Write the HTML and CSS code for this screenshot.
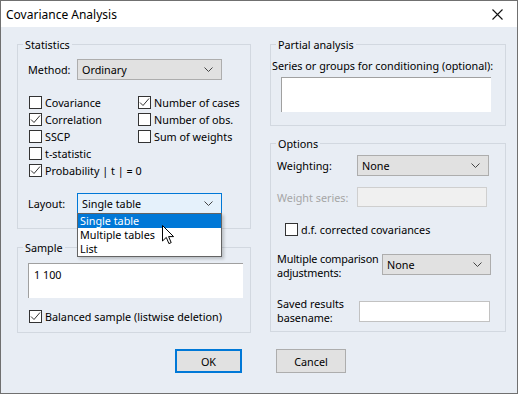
FILE: index.html
```html
<!DOCTYPE html>
<html lang="en">
<head>
    <meta charset="UTF-8">
    <title>Covariance Analysis</title>
    <link rel="stylesheet" href="styles.css">
</head>
<body>
    <div class="window">
        <div class="titlebar">
            <span>Covariance Analysis</span>
            <svg class="close" width="11" height="11" viewBox="0 0 11 11">
                <path d="M0.5 0.5 L10.5 10.5 M10.5 0.5 L0.5 10.5" stroke="#111" stroke-width="1.1" fill="none"/>
            </svg>
        </div>

        <div class="content">
            <div class="columns">
                <div class="col-left">
                    <fieldset class="group">
                        <legend>Statistics</legend>
                        <div class="stats-body">
                            <div class="field-row">
                                <span class="label method-label">Method:</span>
                                <div class="select">
                                    <span>Ordinary</span>
                                    <svg class="chev" width="9" height="5" viewBox="0 0 9 5"><path d="M0.5 0.5 L4.5 4.5 L8.5 0.5" stroke="#444" fill="none"/></svg>
                                </div>
                            </div>

                            <div class="check-grid">
                                <div class="check-row"><span class="box"></span>Covariance</div>
                                <div class="check-row"><span class="box checked"><svg width="11" height="11" viewBox="0 0 11 11"><path d="M1 5.5 L4 8.5 L10 1.5" stroke="#333" stroke-width="1" fill="none"/></svg></span>Number of cases</div>
                                <div class="check-row"><span class="box checked"><svg width="11" height="11" viewBox="0 0 11 11"><path d="M1 5.5 L4 8.5 L10 1.5" stroke="#333" stroke-width="1" fill="none"/></svg></span>Correlation</div>
                                <div class="check-row"><span class="box"></span>Number of obs.</div>
                                <div class="check-row"><span class="box"></span>SSCP</div>
                                <div class="check-row"><span class="box"></span>Sum of weights</div>
                                <div class="check-row"><span class="box"></span>t-statistic</div>
                                <div class="check-row"></div>
                                <div class="check-row wide"><span class="box checked"><svg width="11" height="11" viewBox="0 0 11 11"><path d="M1 5.5 L4 8.5 L10 1.5" stroke="#333" stroke-width="1" fill="none"/></svg></span>Probability | t | = 0</div>
                            </div>

                            <div class="field-row layout-row">
                                <span class="label method-label">Layout:</span>
                                <div class="select focused">
                                    <span>Single table</span>
                                    <svg class="chev" width="9" height="5" viewBox="0 0 9 5"><path d="M0.5 0.5 L4.5 4.5 L8.5 0.5" stroke="#444" fill="none"/></svg>
                                    <ul class="dropdown">
                                        <li class="active">Single table</li>
                                        <li>Multiple tables</li>
                                        <li>List</li>
                                    </ul>
                                    <svg class="pointer" width="13" height="20" viewBox="0 0 13 20">
                                        <path d="M0.5 0.5 L0.5 16 L4.3 12.4 L6.9 18.6 L9.2 17.6 L6.6 11.6 L11.6 11.6 Z" fill="#fff" stroke="#000" stroke-width="1" stroke-linejoin="round"/>
                                    </svg>
                                </div>
                            </div>
                        </div>
                    </fieldset>

                    <fieldset class="group sample">
                        <legend>Sample</legend>
                        <div class="sample-body">
                            <div class="textarea">1 100</div>
                            <div class="check-row balanced"><span class="box checked"><svg width="11" height="11" viewBox="0 0 11 11"><path d="M1 5.5 L4 8.5 L10 1.5" stroke="#333" stroke-width="1" fill="none"/></svg></span>Balanced sample (listwise deletion)</div>
                        </div>
                    </fieldset>
                </div>

                <div class="col-right">
                    <fieldset class="group">
                        <legend>Partial analysis</legend>
                        <div class="partial-body">
                            <div class="partial-label">Series or groups for conditioning (optional):</div>
                            <div class="textarea partial-input"></div>
                        </div>
                    </fieldset>

                    <fieldset class="group options">
                        <legend>Options</legend>
                        <div class="options-body">
                            <div class="field-row">
                                <span class="label weight-label">Weighting:</span>
                                <div class="select weight-select">
                                    <span>None</span>
                                    <svg class="chev" width="9" height="5" viewBox="0 0 9 5"><path d="M0.5 0.5 L4.5 4.5 L8.5 0.5" stroke="#444" fill="none"/></svg>
                                </div>
                            </div>
                            <div class="field-row series-row">
                                <span class="label weight-label disabled">Weight series:</span>
                                <div class="input disabled-input"></div>
                            </div>
                            <div class="check-row df-row"><span class="box"></span>d.f. corrected covariances</div>
                            <div class="field-row multi-row">
                                <span class="label multi-label">Multiple comparison adjustments:</span>
                                <div class="select multi-select">
                                    <span>None</span>
                                    <svg class="chev" width="9" height="5" viewBox="0 0 9 5"><path d="M0.5 0.5 L4.5 4.5 L8.5 0.5" stroke="#444" fill="none"/></svg>
                                </div>
                            </div>
                            <div class="field-row saved-row">
                                <span class="label saved-label">Saved results basename:</span>
                                <div class="input saved-input"></div>
                            </div>
                        </div>
                    </fieldset>
                </div>
            </div>

            <div class="buttons">
                <button class="btn default">OK</button>
                <button class="btn cancel">Cancel</button>
            </div>
        </div>
    </div>
</body>
</html>
```

FILE: styles.css
```css
body {
    margin: 0;
    font-family: "Noto Sans", sans-serif;
    font-size: 10.8px;
    color: #000;
}

.window {
    width: 518px;
    height: 394px;
    box-sizing: border-box;
    border: 1px solid #707070;
    background-color: #e8edf4;
    display: flex;
    flex-direction: column;
}

.titlebar {
    height: 26px;
    background-color: #fff;
    display: flex;
    align-items: center;
    justify-content: space-between;
    padding: 0 14px 0 5px;
    font-size: 12px;
}

.content {
    padding: 10px 11px 0 16px;
}

.columns {
    display: flex;
    gap: 19px;
}

.col-left {
    width: 234px;
}

.col-right {
    width: 236px;
}

.group {
    margin: 0;
    padding: 0;
    border: 1px solid #d2d8e0;
    min-width: 0;
}

.group legend {
    margin-left: 5px;
    padding: 0 2px;
    line-height: 15px;
}

.field-row {
    display: flex;
    align-items: center;
}

.label {
    flex-shrink: 0;
}

.select {
    position: relative;
    box-sizing: border-box;
    height: 21px;
    width: 145px;
    border: 1px solid #adadad;
    background-color: #e1e1e1;
    display: flex;
    align-items: center;
    justify-content: space-between;
    padding: 0 8px 0 4px;
}

.select.focused {
    border-color: #0078d7;
    background-color: #e5f1fb;
}

.chev {
    display: block;
}

.stats-body {
    padding: 7px 10px 14px 10px;
}

.method-label {
    width: 49px;
}

.check-grid {
    margin-top: 14px;
    display: grid;
    grid-template-columns: 109px auto;
}

.check-row {
    height: 17px;
    display: flex;
    align-items: center;
    white-space: nowrap;
}

.box {
    box-sizing: border-box;
    width: 13px;
    height: 13px;
    border: 1px solid #333;
    background-color: #fff;
    margin: 0 3px 0 1px;
    display: flex;
    align-items: center;
    justify-content: center;
}

.layout-row {
    margin-top: 14px;
}

.dropdown {
    position: absolute;
    top: 19px;
    left: -1px;
    width: 145px;
    box-sizing: border-box;
    margin: 0;
    padding: 0;
    list-style: none;
    background-color: #fff;
    border: 1px solid #646464;
    box-shadow: 2px 2px 3px rgba(0, 0, 0, 0.2);
    z-index: 2;
}

.dropdown li {
    height: 14px;
    line-height: 14px;
    padding-left: 2px;
}

.dropdown li.active {
    background-color: #0078d7;
    color: #fff;
}

.pointer {
    position: absolute;
    top: 31px;
    left: 84px;
    z-index: 3;
}

.sample {
    margin-top: 11px;
}

.sample-body {
    padding: 8px 6px 7px 10px;
}

.textarea {
    box-sizing: border-box;
    height: 35px;
    width: 215px;
    background-color: #fff;
    border-top: 1px solid #a0a0a0;
    border-left: 1px solid #a0a0a0;
    padding: 3px 5px;
}

.balanced {
    margin-top: 10px;
}

.partial-body {
    padding: 6px 0 13px 1px;
}

.partial-label {
    line-height: 15px;
    white-space: nowrap;
}

.partial-input {
    margin: 4px 0 0 9px;
    width: 210px;
}

.options {
    margin-top: 10px;
}

.options-body {
    padding: 4px 6px 6px 6px;
}

.weight-label {
    width: 80px;
}

.disabled {
    color: #a6a6a6;
}

.weight-select {
    width: 132px;
}

.input {
    box-sizing: border-box;
    height: 21px;
    background-color: #fff;
    border: 1px solid #c2c2c2;
}

.disabled-input {
    width: 130px;
    height: 20px;
    background-color: #f0f0f0;
    border-color: #cfcfcf;
}

.series-row {
    margin-top: 11px;
}

.df-row {
    margin-top: 14px;
    padding-left: 7px;
}

.multi-row {
    margin-top: 14px;
    align-items: flex-start;
}

.multi-label {
    width: 105px;
    line-height: 14px;
    letter-spacing: -0.15px;
}

.multi-select {
    width: 109px;
    margin-top: 2px;
}

.saved-row {
    margin-top: 17px;
}

.saved-label {
    width: 82px;
    line-height: 14px;
}

.saved-input {
    width: 131px;
}

.buttons {
    display: flex;
    gap: 34px;
    padding-left: 158px;
    margin-top: 16px;
}

.btn {
    font-family: "Noto Sans", sans-serif;
    font-size: 10.8px;
    height: 24px;
    box-sizing: border-box;
    background-color: #e1e1e1;
    border: 1px solid #adadad;
    padding: 0;
    color: #000;
}

.btn.default {
    width: 67px;
    border: 2px solid #0078d7;
}

.btn.cancel {
    width: 70px;
}
```
